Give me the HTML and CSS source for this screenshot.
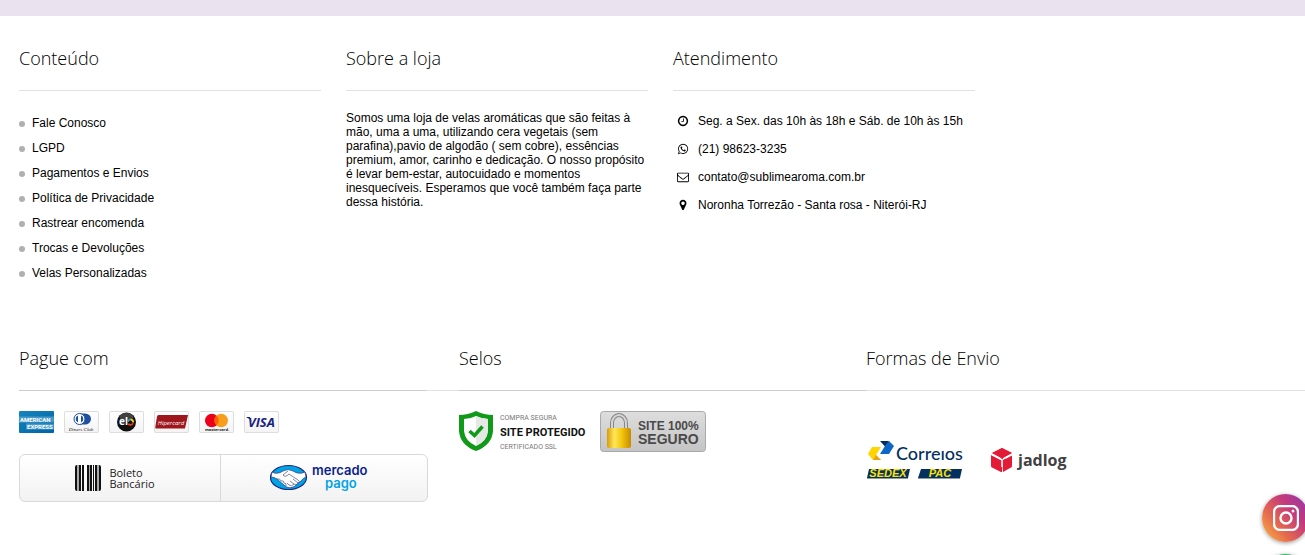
FILE: index.html
```html
<!DOCTYPE html>
<html lang="pt-BR">
<head>
    <meta charset="UTF-8">
    <meta name="viewport" content="width=device-width, initial-scale=1.0">
    <title>Sublime Aroma</title>
    <link rel="stylesheet" href="styles.css">
</head>
<body>

<div class="faixa"></div>

<footer class="rodape">
    <div class="linha-info">
        <section class="coluna">
            <h2 class="titulo">Conteúdo</h2>
            <ul class="lista-links">
                <li><a href="#">Fale Conosco</a></li>
                <li><a href="#">LGPD</a></li>
                <li><a href="#">Pagamentos e Envios</a></li>
                <li><a href="#">Política de Privacidade</a></li>
                <li><a href="#">Rastrear encomenda</a></li>
                <li><a href="#">Trocas e Devoluções</a></li>
                <li><a href="#">Velas Personalizadas</a></li>
            </ul>
        </section>

        <section class="coluna">
            <h2 class="titulo">Sobre a loja</h2>
            <p class="sobre">Somos uma loja de velas aromáticas que são feitas à mão, uma a uma, utilizando cera vegetais (sem parafina),pavio de algodão ( sem cobre), essências premium, amor, carinho e dedicação. O nosso propósito é levar bem-estar, autocuidado e momentos inesquecíveis. Esperamos que você também faça parte dessa história.</p>
        </section>

        <section class="coluna">
            <h2 class="titulo">Atendimento</h2>
            <ul class="contato">
                <li>
                    <svg class="icone" viewBox="0 0 1792 1792"><path d="M1024 544v448q0 14-9 23t-23 9H672q-14 0-23-9t-9-23v-64q0-14 9-23t23-9h224V544q0-14 9-23t23-9h64q14 0 23 9t9 23zm416 352q0-148-73-273t-198-198-273-73-273 73-198 198-73 273 73 273 198 198 273 73 273-73 198-198 73-273zm224 0q0 209-103 385.500t-279.500 279.500-385.500 103-385.500-103-279.500-279.500-103-385.500 103-385.500 279.500-279.500 385.500-103 385.500 103 279.500 279.500 103 385.500z"/></svg>
                    <span>Seg. a Sex. das 10h às 18h e Sáb. de 10h às 15h</span>
                </li>
                <li>
                    <svg class="icone" viewBox="0 0 1792 1792"><path d="M1113 974q13 0 97.500 44t89.500 53q2 5 2 15 0 33-17 76-16 39-71 65.500t-102 26.500q-57 0-190-62-98-45-170-118t-148-185q-72-107-71-194v-8q3-91 74-158 24-22 52-22 6 0 18 1.500t19 1.500q19 0 26.500 6.500t15.500 27.500q8 20 33 88t25 75q0 21-34.500 57.500t-34.500 46.500q0 7 5 15 34 73 102 137 56 53 151 101 12 7 22 7 15 0 54-48.500t52-48.500zm-203 530q127 0 243.500-50t200.500-134 134-200.500 50-243.500-50-243.500-134-200.500-200.500-134-243.500-50-243.500 50-200.500 134-134 200.500-50 243.500q0 203 120 368l-79 233 242-77q158 104 345 104zm0-1382q153 0 292.500 60t240.500 161 161 240.500 60 292.500-60 292.500-161 240.500-240.500 161-292.500 60q-195 0-365-94l-417 134 136-405q-108-178-108-389 0-153 60-292.500t161-240.500 240.500-161 292.500-60z"/></svg>
                    <a href="#">(21) 98623-3235</a>
                </li>
                <li>
                    <svg class="icone" viewBox="0 0 1792 1792"><path d="M1664 1504v-768q-32 36-69 66-268 206-426 338-51 43-83 67t-86.500 48.500-102.500 24.500h-2q-48 0-102.500-24.500t-86.500-48.500-83-67q-158-132-426-338-37-30-69-66v768q0 13 9.500 22.500t22.500 9.500h1472q13 0 22.500-9.500t9.500-22.500zm0-1051v-24.500l-.5-13-3-12.500-5.500-9-9-7.500-14-2.500h-1472q-13 0-22.500 9.500t-9.500 22.500q0 168 147 284 193 152 401 317 6 5 35 29.500t46 37.500 44.500 31.500 50.500 27.500 43 9h2q20 0 43-9t50.500-27.500 44.500-31.500 46-37.500 35-29.500q208-165 401-317 54-43 100.500-115.500t46.500-131.500zm128-37v1088q0 66-47 113t-113 47h-1472q-66 0-113-47t-47-113v-1088q0-66 47-113t113-47h1472q66 0 113 47t47 113z"/></svg>
                    <a href="#">contato@sublimearoma.com.br</a>
                </li>
                <li>
                    <svg class="icone" viewBox="0 0 1792 1792"><path d="M1152 640q0-106-75-181t-181-75-181 75-75 181 75 181 181 75 181-75 75-181zm256 0q0 109-33 179l-364 774q-16 33-47.500 52t-67.500 19-67.500-19-46.500-52l-365-774q-33-70-33-179 0-212 150-362t362-150 362 150 150 362z"/></svg>
                    <span>Noronha Torrezão - Santa rosa - Niterói-RJ</span>
                </li>
            </ul>
        </section>
    </div>

    <div class="linha-pagamento">
        <section class="coluna">
            <div class="cabecalho escuro"><h2 class="titulo">Pague com</h2></div>
            <div class="bandeiras">
                <svg class="bandeira" viewBox="0 0 35 22" role="img" aria-label="American Express">
                    <defs><linearGradient id="amex" x1="0" y1="0" x2="1" y2="1"><stop offset="0" stop-color="#1684bd"/><stop offset="1" stop-color="#0063a5"/></linearGradient></defs>
                    <rect width="35" height="22" rx="1" fill="url(#amex)"/>
                    <path d="M0 5.500H35V11.500H0zM7 12.500H35V18.500H7z" fill="#6fb3da" opacity=".6"/>
                    <g class="letra-amex"><text x="1" y="10.500">AMERICAN</text><text x="8" y="17.500">EXPRESS</text></g>
                </svg>
                <svg class="bandeira borda" viewBox="0 0 35 22" role="img" aria-label="Diners Club">
                    <path d="M15 2.500H21a6 5.500 0 0 1 0 11H15z" fill="#1f4fa0"/>
                    <circle cx="15.500" cy="8" r="5.500" fill="#fff" stroke="#1f4fa0"/>
                    <path d="M14 4.500a3.800 3.800 0 0 0 0 7zM17 4.500a3.800 3.800 0 0 1 0 7z" fill="#1f4fa0"/>
                    <text x="17" y="20" class="letra-diners">Diners Club</text>
                </svg>
                <svg class="bandeira borda" viewBox="0 0 35 22" role="img" aria-label="Elo">
                    <circle cx="17.500" cy="11" r="9.500" fill="#111"/>
                    <ellipse cx="17.500" cy="6" rx="7" ry="4" fill="#555" opacity=".7"/>
                    <text x="10" y="14" class="letra-elo">el</text>
                    <path d="M19 11a2.700 2.700 0 0 1 2.500-2.500" fill="none" stroke="#2ba4dd" stroke-width="1.500"/>
                    <path d="M21.500 8.500A2.700 2.700 0 0 1 24.200 11.500" fill="none" stroke="#ffd000" stroke-width="1.800"/>
                    <path d="M24 12.200a2.700 2.700 0 0 1-4.800.5" fill="none" stroke="#e8382a" stroke-width="1.800"/>
                </svg>
                <svg class="bandeira borda" viewBox="0 0 35 22" role="img" aria-label="Hipercard">
                    <path d="M4.500 4H34L31 17.500H2Q1 17.500 1.300 16L3 5.500Q3.300 4 4.500 4z" fill="#9d171c"/>
                    <text x="17" y="13.500" class="letra-hiper">Hipercard</text>
                </svg>
                <svg class="bandeira borda" viewBox="0 0 35 22" role="img" aria-label="Mastercard">
                    <circle cx="12.800" cy="9.500" r="6.800" fill="#eb001b"/>
                    <circle cx="22.200" cy="9.500" r="6.800" fill="#f79e1b"/>
                    <path d="M17.500 4.500a6.800 6.800 0 0 1 0 10a6.800 6.800 0 0 1 0-10z" fill="#ff5f00"/>
                    <text x="18" y="20" class="letra-master">mastercard.</text>
                </svg>
                <svg class="bandeira borda" viewBox="0 0 35 22" role="img" aria-label="Visa">
                    <text x="17.500" y="15.500" class="letra-visa">VISA</text>
                    <path d="M2.500 6H6L7.500 10Q6 7.500 2.500 6.500z" fill="#17247f"/>
                </svg>
            </div>

            <div class="outros-meios">
                <div class="meio">
                    <svg class="codigo-barras" viewBox="0 0 26 26">
                        <path d="M0 2Q0 0 2 0V26Q0 26 0 24zM4 0H6V26H4zM7 0H9V26H7zM12 0H14V26H12zM15 0H17V26H15zM18 0H19V26H18zM20 0H22V26H20zM24 0Q26 0 26 2V24Q26 26 24 26z" fill="#111"/>
                        <path d="M2 0H4V26H2zM14 0H15V26H14zM22 0H24V26H22z" fill="#aaa"/>
                    </svg>
                    <span>Boleto<br>Bancário</span>
                </div>
                <div class="meio">
                    <svg class="mercado-pago" viewBox="0 0 102 30" role="img" aria-label="Mercado Pago">
                        <ellipse cx="18.500" cy="14.500" rx="18" ry="12" fill="#00a3e5" stroke="#1d2a80" stroke-width="1.200"/>
                        <path d="M2 9Q7 12 13 8Q18 5 23 8Q29 12 35 9L36 14Q33 15 31 18L25 23Q19 27 14 22L7 16Q4 14 1 14z" fill="#fff" stroke="#2d3277" stroke-width=".7"/>
                        <path d="M18 8L13 12Q15 15 19 11L28 17Q31 19 28 20L23 16M28 20Q27 23 24 21L20 18M24 21Q22 24 19 22L17 20M7 16Q10 15 11 18Q14 17 14 20Q17 20 16 23" fill="none" stroke="#2d3277" stroke-width=".6"/>
                        <text x="42" y="12" class="letra-mercado">mercado</text>
                        <text x="55" y="25" class="letra-pago">pago</text>
                    </svg>
                </div>
            </div>
        </section>

        <section class="coluna">
            <div class="cabecalho escuro"><h2 class="titulo">Selos</h2></div>
            <div class="selos">
                <svg class="selo-ssl" viewBox="0 0 132 41" role="img" aria-label="Compra segura, site protegido, certificado SSL">
                    <path d="M17 0Q25 4 34 4V20Q33 34 17 40Q1 34 0 20V4Q9 4 17 0z" fill="#119a19"/>
                    <path d="M17 5Q23 8 29 8V20Q28 30 17 35Q6 30 5 20V8Q11 8 17 5z" fill="#fff"/>
                    <path d="M17 5Q23 8 29 8V20Q28 30 17 35z" fill="#e6e8e6"/>
                    <path d="M10.500 20L15.500 24.500L23.500 15.500" fill="none" stroke="#119a19" stroke-width="3.500"/>
                    <text x="41" y="9" class="letra-ssl">COMPRA SEGURA</text>
                    <text x="41" y="25" class="letra-protegido">SITE PROTEGIDO</text>
                    <text x="41" y="38" class="letra-ssl">CERTIFICADO SSL</text>
                </svg>
                <svg class="selo-seguro" viewBox="0 0 106 41" role="img" aria-label="Site 100% seguro">
                    <defs>
                        <linearGradient id="cinza" x2="0" y2="1"><stop offset="0" stop-color="#dedede"/><stop offset="1" stop-color="#c4c4c4"/></linearGradient>
                        <linearGradient id="ouro"><stop offset="0" stop-color="#d89b05"/><stop offset=".3" stop-color="#ffe65c"/><stop offset=".6" stop-color="#f4c80f"/><stop offset="1" stop-color="#c78b00"/></linearGradient>
                    </defs>
                    <rect x=".5" y=".5" width="105" height="40" rx="3" fill="url(#cinza)" stroke="#a9a9a9"/>
                    <path d="M12 19V12a7 8 0 0 1 14 0V19" fill="none" stroke="#858585" stroke-width="4"/>
                    <path d="M12 19V12a7 8 0 0 1 14 0V19" fill="none" stroke="#d5d5d5" stroke-width="2"/>
                    <rect x="7" y="17" width="24" height="20" rx="2" fill="url(#ouro)"/>
                    <text x="38" y="19" class="letra-site">SITE 100%</text>
                    <text x="38" y="33" class="letra-seguro">SEGURO</text>
                </svg>
            </div>
        </section>

        <section class="coluna">
            <div class="cabecalho"><h2 class="titulo">Formas de Envio</h2></div>
            <div class="envios">
                <svg class="correios" viewBox="0 0 98 40" role="img" aria-label="Correios, Sedex, PAC">
                    <path d="M5 6H14L9 14L14 19H6L1 13z" fill="#ffd400"/>
                    <path d="M9 14L14 19H6z" fill="#e9a21a"/>
                    <path d="M18 5L22 0L27 5L22 13H13z" fill="#0b68c8"/>
                    <path d="M13 0H22L18 5.500z" fill="#04305f"/>
                    <text x="29" y="19" class="letra-correios">Correıos</text>
                    <path d="M2 28H43L41 37H0zM54 28H95L93 37H51z" fill="#04305f"/>
                    <path d="M0 37H41L41 38H0zM51 37H93V38H51z" fill="#8c99a8"/>
                    <text x="21" y="36" class="letra-sedex">SEDEX</text>
                    <text x="73" y="36" class="letra-sedex">PAC</text>
                </svg>
                <svg class="jadlog" viewBox="0 0 78 28" role="img" aria-label="Jadlog">
                    <path d="M11 1L21 6L11 11L1 6zM0 8L10 13V25L1 20.500Q0 20 0 19zM21 8L12 13V25L20 20.500Q21 20 21 19z" fill="#e41b36"/>
                    <path d="M1 6L11 1L21 6L12 11L11 25L10 25V11z" fill="#e41b36"/>
                    <path d="M1 7.500L10.500 12.500M21 7.500L14.500 11M11 12V20" fill="none" stroke="#fff" stroke-width="1.500"/>
                    <text x="27" y="19" class="letra-jadlog">jadlog</text>
                </svg>
            </div>
        </section>
    </div>
</footer>

<div class="flutuantes">
    <a href="#" class="botao-social instagram" aria-label="Instagram">
        <svg viewBox="0 0 26 26">
            <rect x="1" y="1" width="24" height="24" rx="6" fill="none" stroke="#fff" stroke-width="2.400"/>
            <circle cx="13" cy="13" r="5.500" fill="none" stroke="#fff" stroke-width="2.400"/>
            <circle cx="20" cy="6" r="1.500" fill="#fff"/>
        </svg>
    </a>
    <a href="#" class="botao-social whatsapp" aria-label="WhatsApp"></a>
</div>

</body>
</html>
```
FILE: styles.css
```css
* {
    box-sizing: border-box;
}

body {
    margin: 0;
    background-color: #fff;
    color: #000;
    font-family: "Liberation Sans", Arial, sans-serif;
    font-size: 12px;
    line-height: 14px;
}

a {
    color: #000;
    text-decoration: none;
}

a:hover {
    text-decoration: underline;
}

ul {
    list-style: none;
    margin: 0;
    padding: 0;
}

svg {
    display: block;
    flex-shrink: 0;
}

.faixa {
    height: 16px;
    background-color: #ebe2f0;
}

.rodape {
    padding: 30px 0 40px 19px;
}

.titulo {
    margin: 0;
    padding-bottom: 20px;
    border-bottom: 1px solid #e1e1e1;
    font-family: "Open Sans", sans-serif;
    font-size: 18px;
    font-weight: 300;
    line-height: 24px;
}

/* Conteúdo, sobre e atendimento */
.linha-info {
    display: grid;
    grid-template-columns: repeat(4, 1fr);
    gap: 25px;
    padding-right: 3px;
}

.lista-links {
    margin-top: 20px;
}

.lista-links li {
    display: flex;
    align-items: center;
    gap: 7px;
    line-height: 25px;
}

.lista-links li::before {
    content: "";
    width: 6px;
    height: 6px;
    border-radius: 50%;
    background-color: #b0b0b0;
}

.sobre {
    margin: 20px 0 0;
}

.contato {
    margin-top: 16px;
}

.contato li {
    display: flex;
    align-items: center;
    gap: 9px;
    padding-left: 4px;
    line-height: 28px;
}

.icone {
    width: 12px;
    height: 12px;
}

/* Pagamento, selos e envio */
.linha-pagamento {
    display: grid;
    grid-template-columns: 440fr 407fr 439fr;
    margin-top: 60px;
}

.cabecalho {
    border-bottom: 1px solid #e1e1e1;
}

.cabecalho .titulo {
    margin-bottom: -1px;
}

.escuro .titulo {
    border-color: #ccc;
}

.linha-pagamento .coluna:first-child .titulo {
    margin-right: 33px;
}

.bandeiras {
    display: flex;
    gap: 10px;
    margin-top: 20px;
}

.bandeira {
    width: 35px;
    height: 22px;
}

.borda {
    border-radius: 2px;
    background: linear-gradient(#fff, #f3f3f3);
    box-shadow: inset 0 0 0 1px #ddd;
}

.outros-meios {
    display: grid;
    grid-template-columns: 200fr 207fr;
    height: 48px;
    margin: 21px 31px 0 0;
    border: 1px solid #d9d9d9;
    border-radius: 6px;
    background: linear-gradient(#fff, #f2f2f2);
}

.meio {
    display: flex;
    align-items: center;
    justify-content: center;
    gap: 8px;
    padding-right: 10px;
    color: #222;
    font-family: "Open Sans", sans-serif;
    font-size: 11px;
    line-height: 11px;
}

.meio + .meio {
    padding-right: 6px;
    border-left: 1px solid #d9d9d9;
}

.codigo-barras {
    width: 26px;
    height: 26px;
}

.mercado-pago {
    width: 102px;
    height: 30px;
}

.selos {
    display: flex;
    gap: 9px;
    margin-top: 20px;
}

.selo-ssl {
    width: 132px;
    height: 41px;
}

.selo-seguro {
    width: 106px;
    height: 41px;
}

.envios {
    display: flex;
    align-items: center;
    gap: 26px;
    margin-top: 50px;
    padding-left: 1px;
}

.correios {
    width: 98px;
    height: 40px;
}

.jadlog {
    width: 78px;
    height: 28px;
}

/* Letras dos logos */
.letra-amex {
    fill: #fff;
    font: bold 6px Roboto, sans-serif;
}

.letra-diners {
    fill: #222;
    font: italic 5px "Liberation Serif", serif;
    text-anchor: middle;
}

.letra-elo {
    fill: #fff;
    font: bold 10px "Open Sans", sans-serif;
}

.letra-hiper {
    fill: #fff;
    font: italic 6px "Open Sans", sans-serif;
    text-anchor: middle;
}

.letra-master {
    fill: #222;
    font: bold 4px "Open Sans", sans-serif;
    text-anchor: middle;
}

.letra-visa {
    fill: #17247f;
    font: italic bold 13px "Open Sans", sans-serif;
    text-anchor: middle;
}

.letra-mercado {
    fill: #0a1f8f;
    font: 600 13px Inter, sans-serif;
}

.letra-pago {
    fill: #00a3e5;
    font: 600 13px Inter, sans-serif;
}

.letra-ssl {
    fill: #777;
    font: 7px Roboto, sans-serif;
}

.letra-protegido {
    fill: #111;
    font: bold 11px Roboto, sans-serif;
}

.letra-site {
    fill: #4a4a4a;
    font: bold 12px "Liberation Sans", sans-serif;
}

.letra-seguro {
    fill: #4a4a4a;
    font: bold 14px "Liberation Sans", sans-serif;
}

.letra-correios {
    fill: #04305f;
    font: 500 18px Lato, sans-serif;
}

.letra-sedex {
    fill: #ffe100;
    font: italic bold 11px "Liberation Sans", sans-serif;
    text-anchor: middle;
}

.letra-jadlog {
    fill: #414042;
    font: bold 16px "Open Sans", sans-serif;
}

/* Botões flutuantes */
.flutuantes {
    position: fixed;
    right: -4px;
    bottom: -47px;
    display: flex;
    flex-direction: column;
    gap: 12px;
}

.botao-social {
    display: flex;
    align-items: center;
    justify-content: center;
    width: 47px;
    height: 48px;
    border-radius: 50%;
    box-shadow: 0 1px 4px rgba(0, 0, 0, 0.4);
}

.botao-social svg {
    width: 26px;
    height: 26px;
}

.instagram {
    background: linear-gradient(50deg, #fbb040 5%, #e4674f 35%, #c4397c 65%, #8a3ab0);
}

.whatsapp {
    background-color: #1fbf5b;
}
```
